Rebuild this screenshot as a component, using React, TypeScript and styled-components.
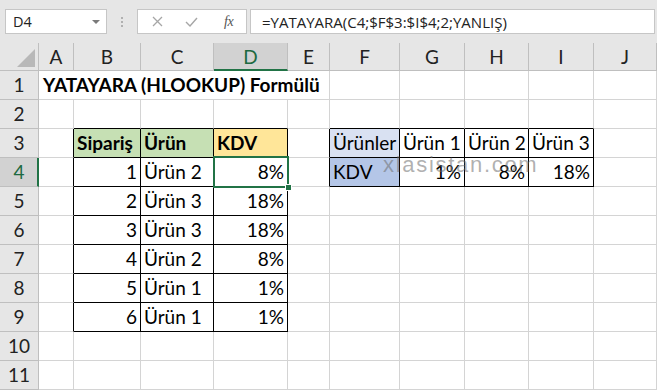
import React from "react";
import styled, { createGlobalStyle } from "styled-components";

const GlobalStyle = createGlobalStyle`
  html, body { margin: 0; padding: 0; background: #ffffff; overflow: hidden; }
  body { width: 657px; height: 390px; }
  * { box-sizing: border-box; }
`;

const CELL_FONT = `"Lato", "Noto Sans", sans-serif`;
const UI_FONT = `"Open Sans", "Noto Sans", sans-serif`;
const GREEN = "#217346";
const GRID = "#d4d4d4";
const HEAD_LINE = "#bfbfbf";

const Page = styled.div`
  width: 657px;
  height: 390px;
  overflow: hidden;
  display: flex;
  flex-direction: column;
  background: #ffffff;
`;

const TopBar = styled.div`
  height: 43px;
  flex: 0 0 43px;
  background: #e6e6e6;
  display: flex;
  align-items: flex-start;
  padding: 9px 2px 0 5px;
`;

const NameBox = styled.div`
  width: 102px;
  height: 25px;
  background: #ffffff;
  border: 1px solid #c6c6c6;
  display: flex;
  align-items: center;
  justify-content: space-between;
  padding: 0 6px 0 7px;
  font-family: ${UI_FONT};
  font-size: 14.5px;
  color: #222;
`;

const DropArrow = styled.span`
  width: 0;
  height: 0;
  border-left: 4px solid transparent;
  border-right: 4px solid transparent;
  border-top: 4px solid #7a7a7a;
`;

const Dots = styled.div`
  width: 30px;
  height: 25px;
  display: flex;
  flex-direction: column;
  align-items: center;
  justify-content: center;
  gap: 2px;
  & > span {
    width: 2px;
    height: 2px;
    background: #b0b0b0;
  }
`;

const FuncBox = styled.div`
  width: 110px;
  height: 25px;
  background: #ffffff;
  border: 1px solid #c6c6c6;
  display: flex;
  align-items: center;
  padding: 0 0 0 14px;
  gap: 22px;
  margin-right: 3px;
`;

const FxText = styled.span`
  font-family: "Liberation Serif", "DejaVu Serif", serif;
  font-style: italic;
  font-size: 14px;
  color: #555;
  letter-spacing: -0.5px;
  margin-left: 4px;
`;

const FormulaInput = styled.div`
  flex: 1;
  height: 25px;
  background: #ffffff;
  border: 1px solid #c6c6c6;
  display: flex;
  align-items: center;
  padding-left: 11px;
  font-family: ${UI_FONT};
  font-size: 15px;
  color: #222;
  white-space: nowrap;
`;

const SheetWrap = styled.div`
  position: relative;
  flex: 1;
  overflow: hidden;
`;

const Sheet = styled.div`
  display: grid;
  grid-template-columns: 39px 35px 67px 73px 74px 42px 70px 65px 64px 65px 1fr;
  grid-template-rows: 28px repeat(11, 29px);
`;

const Corner = styled.div`
  position: relative;
  background: #e6e6e6;
  border-right: 1px solid ${HEAD_LINE};
  border-bottom: 1px solid ${HEAD_LINE};
`;

const CornerTriangle = styled.span`
  position: absolute;
  right: 3px;
  bottom: 3px;
  width: 0;
  height: 0;
  border-left: 18px solid transparent;
  border-bottom: 18px solid #b8b8b8;
`;

const ColHeader = styled.div<{ $selected?: boolean }>`
  background: ${(p) => (p.$selected ? "#d2d2d2" : "#e6e6e6")};
  border-right: 1px solid ${HEAD_LINE};
  border-bottom: ${(p) => (p.$selected ? `2px solid ${GREEN}` : `1px solid ${HEAD_LINE}`)};
  display: flex;
  align-items: center;
  justify-content: center;
  padding-top: ${(p) => (p.$selected ? "1px" : "0")};
  font-family: ${CELL_FONT};
  font-size: 19px;
  color: ${(p) => (p.$selected ? "#1d6a41" : "#222")};
`;

const RowHeader = styled.div<{ $selected?: boolean }>`
  background: ${(p) => (p.$selected ? "#d2d2d2" : "#e6e6e6")};
  border-right: ${(p) => (p.$selected ? `2px solid ${GREEN}` : `1px solid ${HEAD_LINE}`)};
  border-bottom: 1px solid ${HEAD_LINE};
  display: flex;
  align-items: flex-end;
  justify-content: center;
  padding-bottom: 3px;
  padding-left: ${(p) => (p.$selected ? "1px" : "0")};
  font-family: ${CELL_FONT};
  font-size: 19px;
  color: ${(p) => (p.$selected ? "#1d6a41" : "#222")};
`;

const Cell = styled.div<{
  $fill?: string;
  $align?: "left" | "right";
  $bold?: boolean;
  $rc: string;
  $bc: string;
  $span?: number;
}>`
  grid-column: span ${(p) => p.$span ?? 1};
  background: ${(p) => p.$fill ?? "transparent"};
  border-right: 1px solid ${(p) => p.$rc};
  border-bottom: 1px solid ${(p) => p.$bc};
  display: flex;
  align-items: flex-end;
  justify-content: ${(p) => (p.$align === "right" ? "flex-end" : "flex-start")};
  padding: 0 3px 3px ${(p) => (p.$span && p.$span > 1 ? "4px" : "3px")};
  font-family: ${CELL_FONT};
  font-size: 19px;
  font-weight: ${(p) => (p.$bold ? 700 : 400)};
  color: #000;
  white-space: nowrap;
  overflow: visible;
`;

const SelectedCell = styled(Cell)`
  position: relative;
  &::after {
    content: "";
    position: absolute;
    left: -1px;
    top: -2px;
    right: -2px;
    bottom: -2px;
    border: 2px solid ${GREEN};
    pointer-events: none;
  }
`;

const FillHandle = styled.span`
  position: absolute;
  right: -5px;
  bottom: -5px;
  width: 7px;
  height: 7px;
  background: ${GREEN};
  border: 1px solid #fff;
  z-index: 2;
`;

const Watermark = styled.div`
  position: absolute;
  left: 383px;
  top: 109px;
  font-family: "Liberation Sans", Arial, sans-serif;
  font-size: 22px;
  letter-spacing: 1.7px;
  color: rgba(110, 110, 110, 0.55);
  pointer-events: none;
`;

type CellData = {
  v?: string;
  align?: "left" | "right";
  bold?: boolean;
  fill?: string;
  span?: number;
};

const COLS = ["A", "B", "C", "D", "E", "F", "G", "H", "I", "J"];
const GREEN_FILL = "#c6e0b4";
const YELLOW_FILL = "#ffe699";
const BLUE_LIGHT = "#d9e1f2";
const BLUE_MID = "#b4c6e7";

const data: Record<string, CellData> = {
  A1: { v: "YATAYARA (HLOOKUP) Formülü", bold: true, span: 5 },
  B3: { v: "Sipariş", bold: true, fill: GREEN_FILL },
  C3: { v: "Ürün", bold: true, fill: GREEN_FILL },
  D3: { v: "KDV", bold: true, fill: YELLOW_FILL },
  F3: { v: "Ürünler", fill: BLUE_LIGHT },
  G3: { v: "Ürün 1" },
  H3: { v: "Ürün 2" },
  I3: { v: "Ürün 3" },
  F4: { v: "KDV", fill: BLUE_MID },
  G4: { v: "1%", align: "right" },
  H4: { v: "8%", align: "right" },
  I4: { v: "18%", align: "right" },
};

const orders: [string, string, string][] = [
  ["1", "Ürün 2", "8%"],
  ["2", "Ürün 3", "18%"],
  ["3", "Ürün 3", "18%"],
  ["4", "Ürün 2", "8%"],
  ["5", "Ürün 1", "1%"],
  ["6", "Ürün 1", "1%"],
];
orders.forEach(([n, p, k], i) => {
  const r = 4 + i;
  data[`B${r}`] = { v: n, align: "right" };
  data[`C${r}`] = { v: p };
  data[`D${r}`] = { v: k, align: "right" };
});

const inTable = (col: number, row: number) => {
  if (col >= 1 && col <= 3 && row >= 3 && row <= 9) return true;
  if (col >= 5 && col <= 8 && row >= 3 && row <= 4) return true;
  return false;
};

const XIcon = () => (
  <svg width="11" height="11" viewBox="0 0 11 11">
    <path d="M1 1 L10 10 M10 1 L1 10" stroke="#a6a6a6" strokeWidth="1.3" fill="none" />
  </svg>
);

const CheckIcon = () => (
  <svg width="13" height="10" viewBox="0 0 13 10">
    <path d="M1 5 L5 9 L12 1" stroke="#a6a6a6" strokeWidth="1.4" fill="none" />
  </svg>
);

export default function App() {
  const rows: React.ReactNode[] = [];
  for (let r = 1; r <= 11; r++) {
    const sel = r === 4;
    rows.push(
      <RowHeader key={`rh${r}`} $selected={sel}>
        {r}
      </RowHeader>
    );
    let c = 0;
    while (c < COLS.length) {
      const id = `${COLS[c]}${r}`;
      const d = data[id] ?? {};
      const span = d.span ?? 1;
      const lastCol = c + span - 1;
      const rc =
        inTable(lastCol, r) || inTable(lastCol + 1, r) ? "#000" : GRID;
      const bc = inTable(c, r) || inTable(c, r + 1) ? "#000" : GRID;
      if (id === "D4") {
        rows.push(
          <SelectedCell key={id} $rc={rc} $bc={bc} $align={d.align} $fill={d.fill}>
            {d.v}
            <FillHandle />
          </SelectedCell>
        );
      } else {
        rows.push(
          <Cell
            key={id}
            $rc={rc}
            $bc={bc}
            $align={d.align}
            $bold={d.bold}
            $fill={d.fill}
            $span={span}
          >
            {d.v}
          </Cell>
        );
      }
      c += span;
    }
  }

  return (
    <>
      <GlobalStyle />
      <Page>
        <TopBar>
          <NameBox>
            D4
            <DropArrow />
          </NameBox>
          <Dots>
            <span />
            <span />
            <span />
          </Dots>
          <FuncBox>
            <XIcon />
            <CheckIcon />
            <FxText>fx</FxText>
          </FuncBox>
          <FormulaInput>=YATAYARA(C4;$F$3:$I$4;2;YANLIŞ)</FormulaInput>
        </TopBar>
        <SheetWrap>
          <Sheet>
            <Corner>
              <CornerTriangle />
            </Corner>
            {COLS.map((col) => (
              <ColHeader key={col} $selected={col === "D"}>
                {col}
              </ColHeader>
            ))}
            {rows}
          </Sheet>
          <Watermark>xlasistan.com</Watermark>
        </SheetWrap>
      </Page>
    </>
  );
}
